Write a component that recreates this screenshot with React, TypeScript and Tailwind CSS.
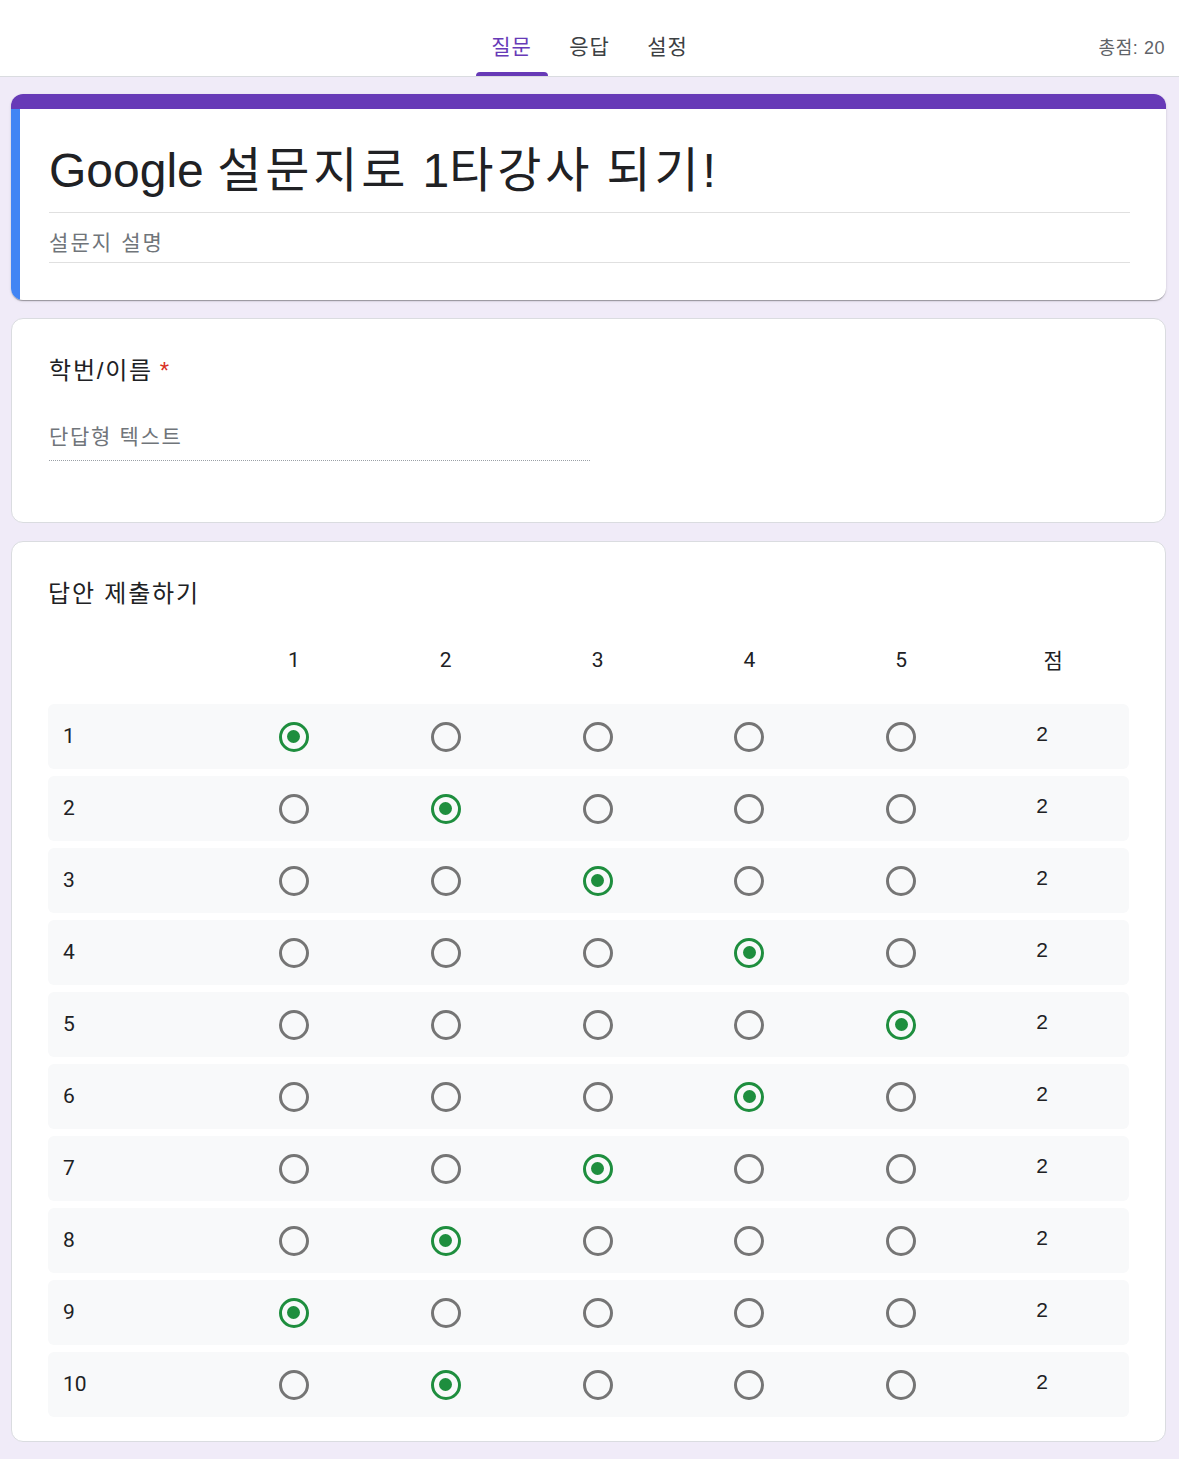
const answers = [1, 2, 3, 4, 5, 4, 3, 2, 1, 2];
const cols = [1, 2, 3, 4, 5];

const kr = "font-['Liberation_Sans','Noto_Sans_CJK_KR',sans-serif]";
const rb = "font-['Roboto','Noto_Sans_CJK_KR',sans-serif]";

function Radio({ checked }: { checked: boolean }) {
  return (
    <span
      className={`flex h-[30px] w-[30px] items-center justify-center rounded-full border-[3px] ${
        checked ? 'border-[#1e8e3e]' : 'border-[#757575]'
      }`}
    >
      {checked && <span className="h-[13px] w-[13px] rounded-full bg-[#1e8e3e]" />}
    </span>
  );
}

function Header() {
  const tabs = ['질문', '응답', '설정'];
  return (
    <header className="relative flex h-[77px] justify-center border-b border-[#dadce0] bg-white">
      <nav className="flex gap-[6px]">
        {tabs.map((t, i) => (
          <div key={t} className="relative flex h-[76px] w-[72px] items-center justify-center pt-[18px]">
            <span className={`${kr} text-[21px] tracking-[0.04em] ${i === 0 ? 'text-[#673ab7]' : 'text-[#3c4043]'}`}>{t}</span>
            {i === 0 && <span className="absolute bottom-0 left-0 h-[4px] w-full rounded-t-[4px] bg-[#673ab7]" />}
          </div>
        ))}
      </nav>
      <div className={`${kr} absolute right-[14px] top-[35px] text-[18px] tracking-[0.03em] text-[#5f6368]`}>총점: 20</div>
    </header>
  );
}

export default function App() {
  return (
    <div className="min-h-[1459px] bg-[#f0ebf8]">
      <Header />
      <main className="flex flex-col gap-[18px] pb-[16px] pl-[11px] pr-[13px] pt-[17px]">
        {/* 제목 카드 */}
        <section className="overflow-hidden rounded-[12px] bg-white shadow-[0_2px_1px_-1px_rgba(0,0,0,0.2),0_1px_1px_0_rgba(0,0,0,0.14),0_1px_3px_0_rgba(0,0,0,0.12)]">
          <div className="h-[15px] bg-[#673ab7]" />
          <div className="border-l-[9px] border-[#4285f4] pb-[37px] pl-[29px] pr-[36px] pt-[32px]">
            <h1 className={`${kr} border-b border-[#e0e0e0] pb-[11px] text-[48px] leading-[60px] text-[#202124]`}>
              Google <span className="tracking-[0.08em]">설문지로</span> 1<span className="tracking-[0.08em]">타강사</span>{' '}
              <span className="tracking-[0.08em]">되기</span>!
            </h1>
            <p className={`${kr} mt-[15px] border-b border-[#e0e0e0] pb-[4px] text-[21px] leading-[30px] tracking-[0.1em] text-[#70757a]`}>
              설문지 설명
            </p>
          </div>
        </section>

        {/* 학번/이름 */}
        <section className="rounded-[12px] border border-[#dadce0] bg-white pb-[61px] pl-[37px] pr-[36px] pt-[36px]">
          <div className={`${kr} text-[24px] leading-[32px] text-[#202124]`}>
            <span className="tracking-[0.075em]">학번/이름</span> <span className="text-[#d93025]">*</span>
          </div>
          <div className={`${kr} mt-[35px] w-[541px] border-b border-dotted border-[#9aa0a6] pb-[8px] text-[21px] leading-[30px] tracking-[0.08em] text-[#70757a]`}>
            단답형 텍스트
          </div>
        </section>

        {/* 답안 제출하기 */}
        <section className="rounded-[12px] border border-[#dadce0] bg-white pb-[24px] pl-[36px] pr-[36px] pt-[36px]">
          <div className={`${kr} text-[24px] leading-[32px] tracking-[0.076em] text-[#202124]`}>답안 제출하기</div>
          <div className="mt-[19px] grid h-[64px] grid-cols-[170px_repeat(6,1fr)] items-center">
            <div />
            {cols.map((c) => (
              <div key={c} className={`${rb} text-center text-[21px] text-[#202124]`}>{c}</div>
            ))}
            <div className={`${kr} text-center text-[21px] text-[#202124]`}>점</div>
          </div>
          <div className="mt-[11px] flex flex-col gap-[7px]">
            {answers.map((a, r) => (
              <div key={r} className="grid h-[65px] grid-cols-[170px_repeat(6,1fr)] items-center rounded-[6px] bg-[#f8f9fa]">
                <div className={`${rb} pl-[15px] text-[21px] text-[#202124]`}>{r + 1}</div>
                {cols.map((c) => (
                  <div key={c} className="flex justify-center">
                    <Radio checked={a === c} />
                  </div>
                ))}
                <div className={`${kr} pb-[6px] pr-[22px] text-center text-[21px] text-[#202124]`}>2</div>
              </div>
            ))}
          </div>
        </section>
      </main>
    </div>
  );
}
